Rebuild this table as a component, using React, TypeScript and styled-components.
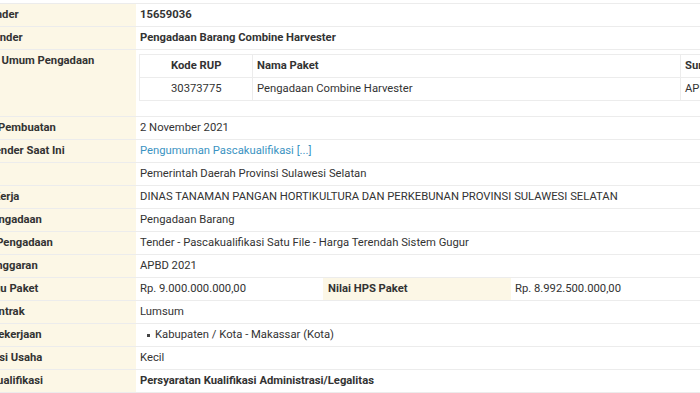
import styled, { createGlobalStyle } from "styled-components";

const GlobalStyle = createGlobalStyle`
  html, body {
    margin: 0;
    padding: 0;
    background: #fff;
    overflow: hidden;
  }
  body {
    font-family: Roboto, "Liberation Sans", Arial, sans-serif;
    font-size: 11.25px;
    color: #333;
  }
`;

const Page = styled.div`
  width: 1100px;
  margin-left: -50px;
  padding-top: 3px;
`;

const Table = styled.table`
  width: 100%;
  border-collapse: collapse;
  table-layout: fixed;
  border-top: 1px solid #ececec;
`;

const Label = styled.th`
  background: #fcf7e6;
  font-weight: 700;
  text-align: left;
  vertical-align: top;
  padding: 4px 5px;
  line-height: 14px;
  border-bottom: 1px solid #ececec;
  white-space: nowrap;
  overflow: hidden;
`;

const Value = styled.td<{ $bold?: boolean }>`
  font-weight: ${({ $bold }) => ($bold ? 700 : 400)};
  padding: 4px 4px;
  line-height: 14px;
  vertical-align: top;
  border-bottom: 1px solid #ececec;
  white-space: nowrap;
`;

const Link = styled.a`
  color: #3b93c2;
  text-decoration: none;
`;

const Inner = styled.table`
  width: 841px;
  border-collapse: collapse;
  table-layout: fixed;
  margin: 0 0 11px -1px;
  th,
  td {
    box-sizing: border-box;
    border: 1px solid #ececec;
    padding: 4px 4px;
    line-height: 14px;
    text-align: left;
    white-space: nowrap;
  }
  th {
    font-weight: 700;
  }
`;

const InnerCell = styled.td<{ $pad?: number }>`
  padding-left: ${({ $pad }) => $pad ?? 4}px !important;
`;

const InnerHead = styled.th<{ $pad?: number; $width: number }>`
  width: ${({ $width }) => $width}px;
  padding-left: ${({ $pad }) => $pad ?? 4}px !important;
`;

const Bullets = styled.ul`
  margin: 0;
  padding-left: 7px;
  list-style: none;
  li::before {
    content: "";
    display: inline-block;
    width: 3px;
    height: 3px;
    background: #444;
    margin-right: 5px;
    vertical-align: middle;
  }
`;

const rows: [string, React.ReactNode, boolean?][] = [
  ["Tanggal Pembuatan", "2 November 2021"],
  ["Tahap Tender Saat Ini", <Link href="#">Pengumuman Pascakualifikasi [...]</Link>],
  ["Instansi", "Pemerintah Daerah Provinsi Sulawesi Selatan"],
  ["Satuan Kerja", "DINAS TANAMAN PANGAN HORTIKULTURA DAN PERKEBUNAN PROVINSI SULAWESI SELATAN"],
  ["Jenis Pengadaan", "Pengadaan Barang"],
  ["Metode Pengadaan", "Tender - Pascakualifikasi Satu File - Harga Terendah Sistem Gugur"],
  ["Tahun Anggaran", "APBD 2021"],
];

const rowsAfter: [string, React.ReactNode, boolean?][] = [
  ["Jenis Kontrak", "Lumsum"],
  [
    "Lokasi Pekerjaan",
    <Bullets>
      <li>Kabupaten / Kota - Makassar (Kota)</li>
    </Bullets>,
  ],
  ["Kualifikasi Usaha", "Kecil"],
  ["Syarat Kualifikasi", "Persyaratan Kualifikasi Administrasi/Legalitas", true],
];

const App = () => {
  return (
    <>
      <GlobalStyle />
      <Page>
        <Table>
          <colgroup>
            <col style={{ width: 186 }} />
            <col style={{ width: 187 }} />
            <col style={{ width: 188 }} />
            <col />
          </colgroup>
          <tbody>
            <tr>
              <Label>Kode Tender</Label>
              <Value colSpan={3} $bold>15659036</Value>
            </tr>
            <tr>
              <Label>Nama Tender</Label>
              <Value colSpan={3} $bold>Pengadaan Barang Combine Harvester</Value>
            </tr>
            <tr>
              <Label>Rencana Umum Pengadaan</Label>
              <Value colSpan={3}>
                <Inner>
                  <thead>
                    <tr>
                      <InnerHead $width={113} $pad={31}>Kode RUP</InnerHead>
                      <InnerHead $width={428}>Nama Paket</InnerHead>
                      <InnerHead $width={300}>Sumber Dana</InnerHead>
                    </tr>
                  </thead>
                  <tbody>
                    <tr>
                      <InnerCell $pad={31}>30373775</InnerCell>
                      <InnerCell>Pengadaan Combine Harvester</InnerCell>
                      <InnerCell>APBD</InnerCell>
                    </tr>
                  </tbody>
                </Inner>
              </Value>
            </tr>
            {rows.map(([label, value, bold]) => (
              <tr key={label}>
                <Label>{label}</Label>
                <Value colSpan={3} $bold={bold}>{value}</Value>
              </tr>
            ))}
            <tr>
              <Label>Nilai Pagu Paket</Label>
              <Value>Rp. 9.000.000.000,00</Value>
              <Label>Nilai HPS Paket</Label>
              <Value>Rp. 8.992.500.000,00</Value>
            </tr>
            {rowsAfter.map(([label, value, bold]) => (
              <tr key={label}>
                <Label>{label}</Label>
                <Value colSpan={3} $bold={bold}>{value}</Value>
              </tr>
            ))}
          </tbody>
        </Table>
      </Page>
    </>
  );
};

export default App;
